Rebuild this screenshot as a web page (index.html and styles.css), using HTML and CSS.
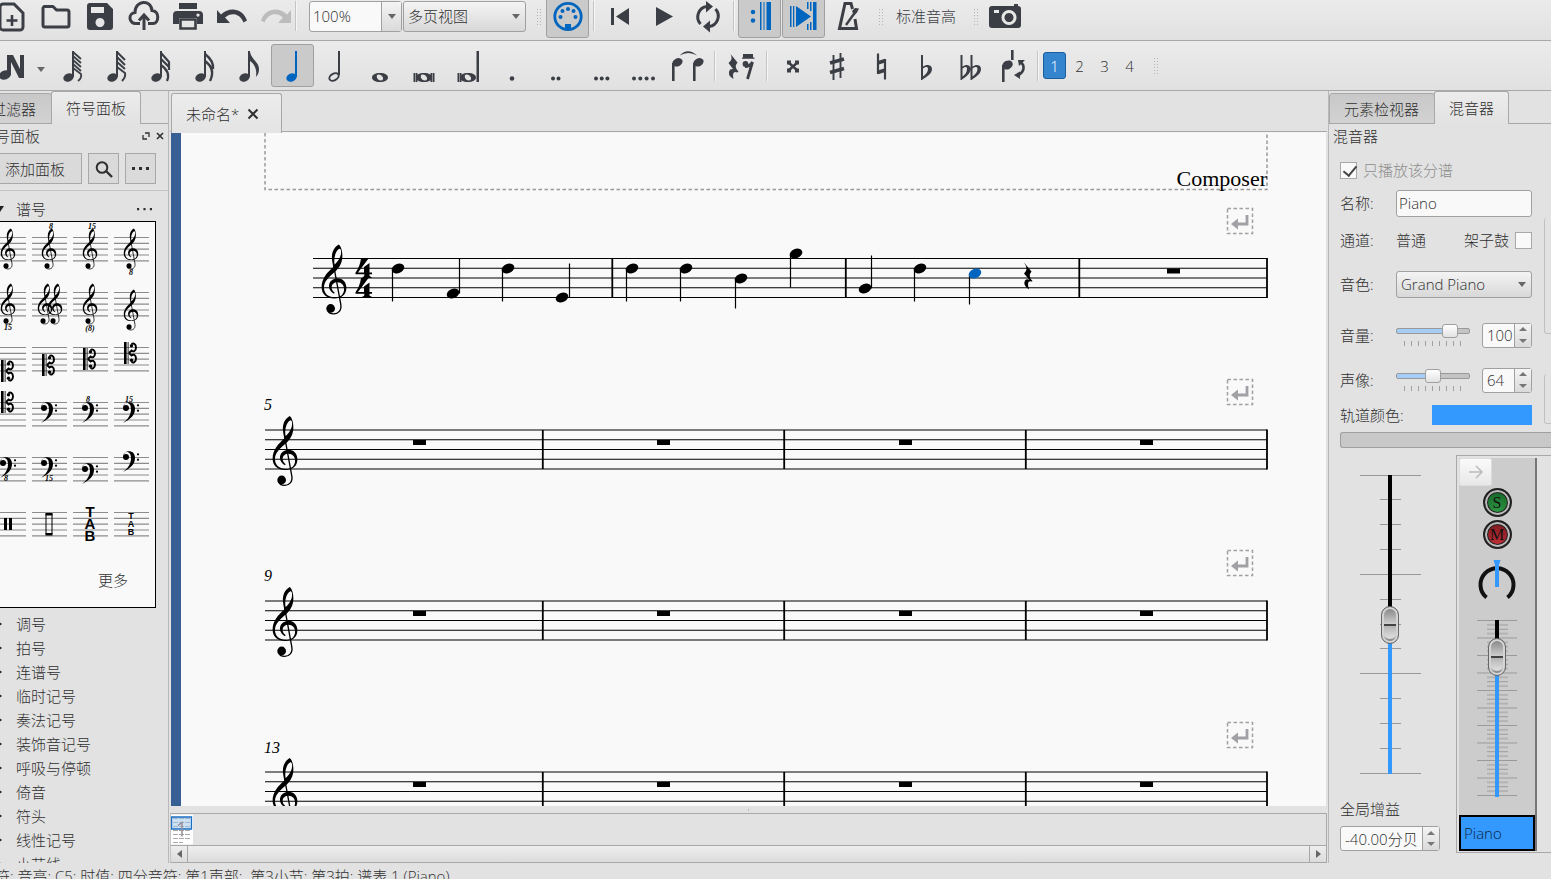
FILE: index.html
```html
<!DOCTYPE html>
<html lang="zh-CN">
<head>
  <meta charset="UTF-8">
  <title>未命名*</title>
  <link rel="stylesheet" href="styles.css">
</head>
<body>

<!-- Shared symbols -->
<svg class="defs" aria-hidden="true">
  <symbol id="treble" viewBox="195 145 82 215">
    <path fill-rule="evenodd" d="M250 148C236 156 228 172 230 192C231 202 233 210 234 215C216 231 199 248 199 275C199 297 214 309 237 309C258 309 273 298 273 277C273 261 262 249 247 249C231 249 221 260 221 273C221 284 228 291 236 295L238 292C232 288 229 283 229 276C229 267 237 261 246 261C259 261 266 270 266 282C266 297 254 306 238 306C219 306 206 295 206 276C206 258 222 244 238 230C252 217 261 203 261 182C261 168 257 152 250 148ZM252 161C256 161 258 166 257 174C256 188 247 199 238 208C234 192 240 166 252 161Z"/>
    <path d="M235 210L256 325C260 345 248 355 235 355C225 355 218 349 216 342" fill="none" stroke="currentColor" stroke-width="4"/>
    <circle cx="226" cy="339" r="13"/>
  </symbol>
  <symbol id="bass" viewBox="0 0 41 24" overflow="visible">
    <path d="M12 5C13-1 24-2 24 7C24 14 18 18 12 21C17 17 20 13 20 7C20 3 18 1 16 1C14 1 13 3 12 5Z"/>
    <circle cx="15" cy="6" r="3"/><circle cx="27" cy="3.3" r="1.1"/><circle cx="27" cy="8.7" r="1.1"/>
  </symbol>
  <symbol id="cclef" viewBox="0 0 41 22" overflow="visible">
    <path d="M13 0h2.6v22H13z"/><path d="M16.4 0h1.6v22h-1.6z" opacity=".5"/>
    <path d="M18 11L20.500 8.500C22 10 25 9.500 25 5.500C25 1.500 22 .8 20.600 2M18 11L20.500 13.500C22 12 25 12.500 25 16.500C25 20.500 22 21.200 20.600 20" fill="none" stroke="currentColor" stroke-width="1.900"/>
    <circle cx="20.500" cy="3.800" r="1.700"/><circle cx="20.500" cy="18.200" r="1.700"/>
  </symbol>
  <symbol id="staff" viewBox="0 0 41 24" overflow="visible">
    <path d="M3 .5h35M3 6.300h35M3 12.200h35M3 18h35M3 23.900h35" stroke="#8c8c8c" stroke-width="1.200"/>
  </symbol>
  <symbol id="head" viewBox="-8 -6 16 12" overflow="visible">
    <ellipse rx="6.500" ry="4.700" transform="rotate(-22)"/>
  </symbol>
  <symbol id="break" viewBox="0 0 26 26" overflow="visible">
    <path d="M.5.5h25v25H.5z" fill="none" stroke="#a0a0a5" stroke-width="1.500" stroke-dasharray="3.500 2.500"/>
    <path d="M20 7v9H8" fill="none" stroke="#a0a0a5" stroke-width="2.800"/><path d="M4 16l7-5.500v11z" fill="#a0a0a5"/>
  </symbol>
  <symbol id="notehead" viewBox="0 0 32 32"><ellipse cx="11.500" cy="27.500" rx="5.300" ry="4" transform="rotate(-22 11.500 27.500)"/><path d="M15 1h2v26h-2z"/></symbol>
  <symbol id="system" viewBox="0 0 1002 40" overflow="visible">
    <path d="M0 0h1002M0 9.750h1002M0 19.500h1002M0 29.250h1002M0 39h1002" stroke="#000" stroke-width="1.200"/>
    <use href="#treble" x="6" y="-15" width="28" height="72"/>
    <path d="M277.800 0v39M519.200 0v39M760.800 0v39M1002-.5v40" stroke="#000" stroke-width="1.800"/>
    <path d="M148 10h13v5h-13zM392 10h13v5h-13zM634 10h13v5h-13zM875 10h13v5h-13z"/>
  </symbol>
</svg>

<!-- Main toolbar -->
<header class="toolbar toolbar-file">
  <button class="tool" aria-label="新建"><svg viewBox="0 0 32 32"><path d="M7 4h11l9 9v14a3 3 0 0 1-3 3H7a3 3 0 0 1-3-3V7a3 3 0 0 1 3-3z" fill="none" stroke="currentColor" stroke-width="3"/><path d="M16 15v11M10.500 20.500h11" stroke="currentColor" stroke-width="2.600"/></svg></button>
  <button class="tool" aria-label="打开"><svg viewBox="0 0 32 32"><path d="M4 6.500h9l3.500 3.500H27a2 2 0 0 1 2 2v13a2 2 0 0 1-2 2H5a2 2 0 0 1-2-2V8z" fill="none" stroke="currentColor" stroke-width="3" stroke-linejoin="round"/></svg></button>
  <button class="tool" aria-label="保存"><svg viewBox="0 0 32 32"><path fill-rule="evenodd" d="M6 3h17l6 6v18a3 3 0 0 1-3 3H6a3 3 0 0 1-3-3V6a3 3 0 0 1 3-3zM7 7v6h13V7zM16 18a4.500 4.500 0 1 0 .01 0z"/></svg></button>
  <button class="tool" aria-label="上传"><svg viewBox="0 0 32 32"><path d="M12 23.500H8a5.500 5.500 0 0 1-1-11C7 0 23-1 24 10.500C32 11 31 23.500 25 23.500H20" fill="none" stroke="currentColor" stroke-width="3"/><path d="M16 30V16M11 20.500l5-5.500 5 5.500" fill="none" stroke="currentColor" stroke-width="3"/></svg></button>
  <button class="tool" aria-label="打印"><svg viewBox="0 0 32 32"><path d="M7 3h18v6H7z"/><path fill-rule="evenodd" d="M5 11h22a4 4 0 0 1 4 4v9h-6v-6H7v6H1v-9a4 4 0 0 1 4-4zM26 13.500a1.600 1.600 0 1 0 .01 0z"/><path d="M8.500 19.500h15v9h-15z" fill="none" stroke="currentColor" stroke-width="2.600"/></svg></button>
  <button class="tool" aria-label="撤销"><svg viewBox="0 0 32 32"><path d="M1 10l4 4.500C14 6 27 9 31 20.500l-3.500 2C24 13 15 12 9 17.500L14 23H1z"/></svg></button>
  <button class="tool" aria-label="重做" disabled><svg viewBox="0 0 32 32"><path d="M31 10l-4 4.500C18 6 5 9 1 20.500l3.500 2C8 13 17 12 23 17.500L18 23h13z"/></svg></button>
  <span class="sep sep-first"></span>
  <div class="combo combo-zoom">
    <input type="text" value="100%" aria-label="缩放">
    <button aria-label="缩放列表"><i class="caret"></i></button>
  </div>
  <div class="select combo-view">
    <select aria-label="视图"><option>多页视图</option></select><i class="caret"></i>
  </div>
  <span class="grip"></span>
  <button class="tool on" aria-label="MIDI输入"><svg viewBox="0 0 32 32"><circle cx="16" cy="16.500" r="13.200" fill="none" stroke="currentColor" stroke-width="2.800"/><path d="M13 24h6v6h-6z"/><circle cx="16" cy="9" r="2"/><circle cx="10.500" cy="11" r="2"/><circle cx="21.500" cy="11" r="2"/><circle cx="8.500" cy="17" r="2"/><circle cx="23.500" cy="17" r="2"/></svg></button>
  <span class="sep"></span>
  <button class="tool" aria-label="回到开头"><svg viewBox="0 0 32 32"><path d="M7 8h3v17H7zM25 8v17L12 16.500z"/></svg></button>
  <button class="tool" aria-label="播放"><svg viewBox="0 0 32 32"><path d="M8 7v19l17-9.500z"/></svg></button>
  <button class="tool" aria-label="循环"><svg viewBox="0 0 32 32"><path d="M8.500 24A10.500 10.500 0 0 1 15 6.500M23.500 9A10.500 10.500 0 0 1 17 26.500" fill="none" stroke="currentColor" stroke-width="3"/><path d="M14 1l7 5.500-7 6zM18 20.500v12l-7-6z"/></svg></button>
  <span class="sep"></span>
  <button class="tool on" aria-label="播放反复"><svg viewBox="0 0 32 32"><path d="M16 2h1.500v28H16zM19.500 2h1v28h-1zM22.500 2H27v28h-4.500z"/><circle cx="9" cy="12" r="2.200"/><circle cx="9" cy="20.500" r="2.200"/></svg></button>
  <button class="tool on" aria-label="跟随播放"><svg viewBox="0 0 32 32"><path d="M2 6h1.500v21H2zM5 6h1.300v21H5zM8 6l15 10.500L8 27zM19 2h1.500v7H19zM22 2h1.500v9H22zM19 24h1.500v6H19zM22 22h1.500v8H22zM25 2h3.500v28H25z"/></svg></button>
  <button class="tool" aria-label="节拍器"><svg viewBox="0 0 32 32"><path d="M20.500 9L19 3.500h-6L7.500 28.500h17L23 19" fill="none" stroke="currentColor" stroke-width="3"/><path d="M14 25L24 11" stroke="currentColor" stroke-width="2.400"/><path d="M20 11l3-3 4 .5-2 4-3 3z"/></svg></button>
  <span class="grip grip-wide"></span>
  <button class="text-tool">标准音高</button>
  <span class="grip grip-last"></span>
  <button class="tool" aria-label="截图"><svg viewBox="0 0 32 32"><path fill-rule="evenodd" d="M3 6h22V4h4v2a3 3 0 0 1 3 3v16a3 3 0 0 1-3 3H3a3 3 0 0 1-3-3V9a3 3 0 0 1 3-3zM20 10a7.500 7.500 0 1 0 .01 0zM20 13a4.500 4.500 0 1 1-.01 0zM5 10v3h5v-3z"/></svg></button>
</header>

<!-- Note input toolbar -->
<div class="toolbar toolbar-notes">
  <button class="tool input-mode" aria-label="音符输入"><svg viewBox="0 0 32 32"><path d="M10 5h6l7 14V5h4v23h-5L14 12v13h-4z"/><ellipse cx="8" cy="25" rx="6" ry="4.500" transform="rotate(-20 8 25)"/></svg></button>
  <button class="drop" aria-label="输入模式"><i class="caret"></i></button>
  <button class="tool" aria-label="128分音符"><svg viewBox="0 0 32 32"><use href="#notehead"/><path d="M16 2l8 7M16 6l8 7M16 10l8 7M16 14l8 7M16 18l8 6q1 4-3 7" fill="none" stroke="currentColor" stroke-width="1.800"/></svg></button>
  <button class="tool" aria-label="64分音符"><svg viewBox="0 0 32 32"><use href="#notehead"/><path d="M16 2l8 8M16 7l8 8M16 12l8 7M16 17l8 6q1 4-3 8" fill="none" stroke="currentColor" stroke-width="2"/></svg></button>
  <button class="tool" aria-label="32分音符"><svg viewBox="0 0 32 32"><use href="#notehead"/><path d="M16 3l8 9v4M16 9l8 8v3M16 15q10 7 6 16" fill="none" stroke="currentColor" stroke-width="2.200"/></svg></button>
  <button class="tool" aria-label="16分音符"><svg viewBox="0 0 32 32"><use href="#notehead"/><path d="M16 4q9 7 8 15M16 11q11 8 5 20" fill="none" stroke="currentColor" stroke-width="2.400"/></svg></button>
  <button class="tool" aria-label="8分音符"><svg viewBox="0 0 32 32"><use href="#notehead"/><path d="M17 2C18 9 26 12 26 19C26 22 25 25 23 27C24 20 22 14 17 11z"/></svg></button>
  <button class="tool on" aria-label="四分音符"><svg viewBox="0 0 32 32"><use href="#notehead" x="3"/></svg></button>
  <button class="tool" aria-label="二分音符"><svg viewBox="0 0 32 32"><ellipse cx="13" cy="27" rx="5" ry="3.300" transform="rotate(-28 13 27)" fill="none" stroke="currentColor" stroke-width="1.900"/><path d="M17 1h2v24h-2z"/></svg></button>
  <button class="tool" aria-label="全音符"><svg viewBox="0 0 32 32"><path fill-rule="evenodd" d="M15 23c5 0 8 2 8 4.500S20 32 15 32s-8-2-8-4.500S10 23 15 23zM13 24.500c-2.500 1-1 6 3 6s2-6.500-3-6z"/></svg></button>
  <button class="tool" aria-label="二全音符"><svg viewBox="0 0 32 32"><path fill-rule="evenodd" d="M15 23c5 0 8 2 8 4.500S20 32 15 32s-8-2-8-4.500S10 23 15 23zM13 24.500c-2.500 1-1 6 3 6s2-6.500-3-6z"/><path d="M4.500 23h2v9h-2zM7 23h1.500v9H7zM21.500 23H23v9h-1.500zM23.500 23h2v9h-2z"/></svg></button>
  <button class="tool" aria-label="长音符"><svg viewBox="0 0 32 32"><path fill-rule="evenodd" d="M15 23c5 0 8 2 8 4.500S20 32 15 32s-8-2-8-4.500S10 23 15 23zM13 24.500c-2.500 1-1 6 3 6s2-6.500-3-6z"/><path d="M4.500 23h2v9h-2zM7 23h1.500v9H7zM23.500 1h2.500v31h-2.500z"/></svg></button>
  <button class="tool" aria-label="附点"><svg viewBox="0 0 32 32"><circle cx="15" cy="28.500" r="2.300"/></svg></button>
  <button class="tool" aria-label="复附点"><svg viewBox="0 0 32 32"><circle cx="12" cy="28.500" r="2"/><circle cx="17.500" cy="28.500" r="2"/></svg></button>
  <button class="tool" aria-label="三附点"><svg viewBox="0 0 32 32"><circle cx="11" cy="28.500" r="2"/><circle cx="16.700" cy="28.500" r="2"/><circle cx="22.400" cy="28.500" r="2"/></svg></button>
  <button class="tool" aria-label="四附点"><svg viewBox="0 0 32 32"><circle cx="5" cy="28.500" r="2"/><circle cx="11.300" cy="28.500" r="2"/><circle cx="17.600" cy="28.500" r="2"/><circle cx="24" cy="28.500" r="2"/></svg></button>
  <button class="tool" aria-label="延音线"><svg viewBox="0 0 32 32"><ellipse cx="4.500" cy="12.300" rx="5.300" ry="4" transform="rotate(-25 4.500 12.300)"/><ellipse cx="25.500" cy="12.300" rx="5.300" ry="4" transform="rotate(-25 25.500 12.300)"/><path d="M-1 13h2.600v18H-1zM20 13h2.600v18H20zM6.500 5.500q8.500-8.500 17.500 0q-8.500-5-17.500 0z"/></svg></button>
  <span class="sep"></span>
  <button class="tool" aria-label="休止符"><svg viewBox="0 0 32 32"><path d="M5.500 4l7 8.500q-4 4.500 1 9l-1 1q-6-2-4 6.500q-7-4-3.500-9.500l3-.5-4.500-6q5-4 2-9zM18 4h10v3.500h1.500v1.300H17V7.500h1z"/><circle cx="20.500" cy="14" r="2.900"/><path d="M20 16.500q5 0 7.500-4.500l-5 17" fill="none" stroke="currentColor" stroke-width="2.800"/></svg></button>
  <span class="sep"></span>
  <button class="tool" aria-label="重升"><svg viewBox="0 0 32 32"><path d="M11 12l10 9M21 12l-10 9" stroke="currentColor" stroke-width="2.400"/><path d="M10 10.500h4v4h-4zM18 10.500h4v4h-4zM10 18.500h4v4h-4zM18 18.500h4v4h-4z"/></svg></button>
  <button class="tool" aria-label="升号"><svg viewBox="0 0 32 32"><path d="M12.500 5v25M19.500 3v25" stroke="currentColor" stroke-width="1.900"/><path d="M9 13l14-4M9 22.500l14-4" stroke="currentColor" stroke-width="3.600"/></svg></button>
  <button class="tool" aria-label="还原"><svg viewBox="0 0 32 32"><path d="M13 3.500V24M20 9v20.500" stroke="currentColor" stroke-width="2.200"/><path d="M12.500 13l8-2.500M12.500 22.500l8-2.500" stroke="currentColor" stroke-width="3.800"/></svg></button>
  <button class="tool" aria-label="降号"><svg viewBox="0 0 32 32"><path fill-rule="evenodd" d="M12 5h2v11.500c4-3 9-1.500 9 2.500c0 5-6 8-10 11h-1zM14 18.500v8c3-2 5-5 5-7.500c0-3-3-2.500-5-.5z"/></svg></button>
  <button class="tool" aria-label="重降"><svg viewBox="0 0 32 32"><path fill-rule="evenodd" d="M7.500 5h2v11.500c4-3 8-1.500 8 2.500c0 5-5 8-9 11h-1zM9.500 18.500v8c3-2 4.500-5 4.500-7.500c0-3-2.500-2.500-4.500-.5zM17.500 5h2v11.500c4-3 8.500-1.500 8.500 2.500c0 5-5.500 8-9.500 11h-1zM19.500 18.500v8c3-2 5-5 5-7.500c0-3-3-2.500-5-.5z"/></svg></button>
  <button class="tool" aria-label="翻转方向"><svg viewBox="0 0 32 32"><ellipse cx="10.500" cy="15" rx="5.500" ry="4.300" transform="rotate(-25 10.500 15)"/><path d="M5 15h2.600v17H5zM14 0h2.600v10H14z"/><path d="M23 12q4 2 3.500 6.500T20 26" fill="none" stroke="currentColor" stroke-width="2.600"/><path d="M21 10h7l-6 6zM17 25l6-3.500V29z"/></svg></button>
  <span class="sep sep-tight"></span>
  <button class="voice on">1</button>
  <button class="voice">2</button>
  <button class="voice">3</button>
  <button class="voice">4</button>
  <span class="grip"></span>
</div>

<main class="workspace">

  <!-- Palettes -->
  <aside class="dock palettes">
    <div class="tabs">
      <button class="tab">选择过滤器</button>
      <button class="tab active">符号面板</button>
    </div>
    <div class="dock-title">
      <h2>符号面板</h2>
      <button class="mini" aria-label="浮动"><svg viewBox="0 0 8 8"><path d="M3 1h4v4M5 7H1V3" fill="none" stroke="currentColor" stroke-width="1.300"/></svg></button>
      <button class="mini" aria-label="关闭"><svg viewBox="0 0 8 8"><path d="M1 1l6 6M7 1l-6 6" stroke="currentColor" stroke-width="1.600"/></svg></button>
    </div>
    <div class="palette-actions">
      <button class="flat add">添加面板</button>
      <button class="flat" aria-label="搜索"><svg viewBox="0 0 18 18"><circle cx="7" cy="7.500" r="5.300" fill="none" stroke="currentColor" stroke-width="2"/><path d="M11 11l6 6" stroke="currentColor" stroke-width="2.400"/></svg></button>
      <button class="flat" aria-label="更多"><svg viewBox="0 0 18 18"><path d="M0 7h3v3H0zM7 7h3v3H7zM14 7h3v3h-3z"/></svg></button>
    </div>
    <div class="palette-head"><i class="open"></i><span>谱号</span><button aria-label="谱号选项"><svg viewBox="0 0 14 4"><path d="M0 1h2v2H0zM6 1h2v2H6zM12 1h2v2h-2z"/></svg></button></div>
    <div class="palette">
      <div class="cells">
        <button class="cell" aria-label="高音谱号"><svg viewBox="0 -15 41 55"><use href="#staff" width="41" height="24"/><use href="#treble" x="12" y="-9" width="16" height="42"/></svg></button>
        <button class="cell" aria-label="高八度高音谱号"><svg viewBox="0 -15 41 55"><use href="#staff" width="41" height="24"/><use href="#treble" x="12" y="-9" width="16" height="42"/><text x="22" y="-8">8</text></svg></button>
        <button class="cell" aria-label="高十五度高音谱号"><svg viewBox="0 -15 41 55"><use href="#staff" width="41" height="24"/><use href="#treble" x="12" y="-9" width="16" height="42"/><text x="22" y="-8">15</text></svg></button>
        <button class="cell" aria-label="低八度高音谱号"><svg viewBox="0 -15 41 55"><use href="#staff" width="41" height="24"/><use href="#treble" x="12" y="-9" width="16" height="42"/><text x="20" y="38">8</text></svg></button>
        <button class="cell" aria-label="低十五度高音谱号"><svg viewBox="0 -15 41 55"><use href="#staff" width="41" height="24"/><use href="#treble" x="12" y="-9" width="16" height="42"/><text x="20" y="38">15</text></svg></button>
        <button class="cell" aria-label="双高音谱号"><svg viewBox="0 -15 41 55"><use href="#staff" width="41" height="24"/><use href="#treble" x="8" y="-9" width="16" height="42"/><use href="#treble" x="18" y="-9" width="16" height="42"/></svg></button>
        <button class="cell" aria-label="可选低八度高音谱号"><svg viewBox="0 -15 41 55"><use href="#staff" width="41" height="24"/><use href="#treble" x="12" y="-9" width="16" height="42"/><text x="20" y="39">(8)</text></svg></button>
        <button class="cell" aria-label="法国小提琴谱号"><svg viewBox="0 -15 41 55"><use href="#staff" width="41" height="24"/><use href="#treble" x="12" y="-3" width="16" height="42"/></svg></button>
        <button class="cell" aria-label="女高音谱号"><svg viewBox="0 -15 41 55"><use href="#staff" width="41" height="24"/><use href="#cclef" y="13" width="41" height="22"/></svg></button>
        <button class="cell" aria-label="次女高音谱号"><svg viewBox="0 -15 41 55"><use href="#staff" width="41" height="24"/><use href="#cclef" y="7" width="41" height="22"/></svg></button>
        <button class="cell" aria-label="中音谱号"><svg viewBox="0 -15 41 55"><use href="#staff" width="41" height="24"/><use href="#cclef" y="1" width="41" height="22"/></svg></button>
        <button class="cell" aria-label="次中音谱号"><svg viewBox="0 -15 41 55"><use href="#staff" width="41" height="24"/><use href="#cclef" y="-5" width="41" height="22"/></svg></button>
        <button class="cell" aria-label="上低音谱号"><svg viewBox="0 -15 41 55"><use href="#staff" width="41" height="24"/><use href="#cclef" y="-11" width="41" height="22"/></svg></button>
        <button class="cell" aria-label="低音谱号"><svg viewBox="0 -15 41 55"><use href="#staff" width="41" height="24"/><use href="#bass" width="41" height="24"/></svg></button>
        <button class="cell" aria-label="高八度低音谱号"><svg viewBox="0 -15 41 55"><use href="#staff" width="41" height="24"/><use href="#bass" width="41" height="24"/><text x="18" y="0">8</text></svg></button>
        <button class="cell" aria-label="高十五度低音谱号"><svg viewBox="0 -15 41 55"><use href="#staff" width="41" height="24"/><use href="#bass" width="41" height="24"/><text x="18" y="0">15</text></svg></button>
        <button class="cell" aria-label="低八度低音谱号"><svg viewBox="0 -15 41 55"><use href="#staff" width="41" height="24"/><use href="#bass" width="41" height="24"/><text x="18" y="24">8</text></svg></button>
        <button class="cell" aria-label="低十五度低音谱号"><svg viewBox="0 -15 41 55"><use href="#staff" width="41" height="24"/><use href="#bass" width="41" height="24"/><text x="20" y="24">15</text></svg></button>
        <button class="cell" aria-label="第三线低音谱号"><svg viewBox="0 -15 41 55"><use href="#staff" width="41" height="24"/><use href="#bass" y="6" width="41" height="24"/></svg></button>
        <button class="cell" aria-label="倍低音谱号"><svg viewBox="0 -15 41 55"><use href="#staff" width="41" height="24"/><use href="#bass" y="-6" width="41" height="24"/></svg></button>
        <button class="cell" aria-label="打击乐谱号"><svg viewBox="0 -15 41 55"><use href="#staff" width="41" height="24"/><path d="M16 6h3v12h-3zM21 6h3v12h-3z"/></svg></button>
        <button class="cell" aria-label="打击乐谱号二"><svg viewBox="0 -15 41 55"><use href="#staff" width="41" height="24"/><path d="M17 2h6v20h-6z" fill="none" stroke="#000"/><path d="M16.500 1h7v2.500h-7zM16.500 21h7v2.500h-7z"/></svg></button>
        <button class="cell" aria-label="六线谱谱号"><svg viewBox="0 -15 41 55"><use href="#staff" width="41" height="24"/><g class="tab-clef"><text x="20" y="5">T</text><text x="20" y="17">A</text><text x="20" y="29">B</text></g></svg></button>
        <button class="cell" aria-label="四线谱谱号"><svg viewBox="0 -15 41 55"><use href="#staff" width="41" height="24"/><g class="tab-clef small"><text x="20" y="7">T</text><text x="20" y="15">A</text><text x="20" y="23">B</text></g></svg></button>
      </div>
      <button class="more">更多</button>
    </div>
    <ul class="palette-list">
      <li>调号</li>
      <li>拍号</li>
      <li>连谱号</li>
      <li>临时记号</li>
      <li>奏法记号</li>
      <li>装饰音记号</li>
      <li>呼吸与停顿</li>
      <li>倚音</li>
      <li>符头</li>
      <li>线性记号</li>
      <li>小节线</li>
    </ul>
  </aside>

  <!-- Score -->
  <section class="center">
    <div class="doc-tabs">
      <div class="doc-tab">未命名* <button aria-label="关闭"><svg viewBox="0 0 12 12"><path d="M1.500 1.500l9 9M10.500 1.500l-9 9" stroke="currentColor" stroke-width="2"/></svg></button></div>
    </div>
    <div class="score">
      <svg class="page" aria-label="乐谱">
        <path d="M84 0v56.500h1002V0" fill="none" stroke="#9a9a9a" stroke-width="1.500" stroke-dasharray="3.500 2.500"/>
        <text class="composer" x="1086" y="53">Composer</text>
        <use href="#break" x="1046" y="75" width="26" height="26"/>
        <use href="#break" x="1046" y="246" width="26" height="26"/>
        <use href="#break" x="1046" y="417" width="26" height="26"/>
        <use href="#break" x="1046" y="589" width="26" height="26"/>

        <g transform="translate(132 125.500)">
          <path d="M0 0h954M0 9.750h954M0 19.500h954M0 29.250h954M0 39h954" stroke="#000" stroke-width="1.200"/>
          <use href="#treble" x="7" y="-15" width="28" height="72"/>
          <path id="four" d="M48 0h7.500L45 14h6V8.500l5.500-4V14H59v1.800h-2.500v1.500q0 1 2 1.200v1H49.500v-1q1.800-.2 1.800-1.200v-1.500H42.500V14.200Q47 8 48 0z"/><use href="#four" y="19.500"/>
          <path d="M299.300 0v39M532.800 0v39M766.300 0v39M954-.5v40" stroke="#000" stroke-width="1.800"/>
          <path d="M854 10h13v5h-13z"/>
          <path d="M79.500 10v33M146.500 35V0M189.500 10v33M256.500 39V5M313.500 10v33M367.500 10v33M422.500 20v30M477.500-4v33M558.500 30V-3M601.500 10v33M656.500 15v31" stroke="#000" stroke-width="1.200"/>
          <use href="#head" x="77" y="4" width="16" height="12"/>
          <use href="#head" x="132" y="29" width="16" height="12"/>
          <use href="#head" x="187" y="4" width="16" height="12"/>
          <use href="#head" x="241" y="33" width="16" height="12"/>
          <use href="#head" x="311" y="4" width="16" height="12"/>
          <use href="#head" x="365" y="4" width="16" height="12"/>
          <use href="#head" x="420" y="14" width="16" height="12"/>
          <use href="#head" x="475" y="-11" width="16" height="12"/>
          <use href="#head" x="544" y="24" width="16" height="12"/>
          <use href="#head" x="599" y="4" width="16" height="12"/>
          <use href="#head" class="picked" x="654" y="9" width="16" height="12"/>
          <path d="M711 4l7.500 9q-4 4.500 1 9.500l-.5.500q-6-2-3 8q-6.500-4-4-9q2-2 4.500-.5l-5.500-6.500q5-4 0-11z"/>
        </g>

        <text class="measure" x="83" y="277">5</text>
        <use href="#system" x="84" y="297" width="1002" height="40"/>
        <text class="measure" x="83" y="448">9</text>
        <use href="#system" x="84" y="468" width="1002" height="40"/>
        <text class="measure" x="83" y="620">13</text>
        <use href="#system" x="84" y="639" width="1002" height="40"/>
      </svg>
    </div>
    <div class="splitter"></div>
    <div class="navigator">
      <div class="nav-body">
        <svg class="nav-page" viewBox="0 0 22 30"><path d="M0 0h22v30H0z" fill="#fff"/><path d="M2 4h18M2 8h18M2 12h18M2 16h18M2 20h18M2 24h18M2 28h10" stroke="#aaa" stroke-dasharray="5 1"/><path d="M.5 2.500h20v12H.5z" fill="#9cc4ec" fill-opacity=".5" stroke="#1a6fc4" stroke-width="1.300"/><path d="M7 11l4-3v14" fill="none" stroke="#978d96" stroke-width="1.500"/></svg>
      </div>
      <div class="nav-scroll">
        <button aria-label="向左"><i class="arrow-left"></i></button>
        <span></span>
        <button aria-label="向右"><i class="arrow-right"></i></button>
      </div>
    </div>
  </section>

  <!-- Mixer -->
  <aside class="dock mixer">
    <div class="tabs">
      <button class="tab">元素检视器</button>
      <button class="tab active">混音器</button>
    </div>
    <div class="dock-title"><h2>混音器</h2></div>
    <div class="mixer-top">
      <form class="channel">
        <label class="only-part"><input type="checkbox" checked disabled>只播放该分谱</label>
        <label for="name">名称:</label>
        <input class="field" type="text" id="name" value="Piano">
        <span>通道:</span>
        <div class="line"><span>普通</span><label class="drum">架子鼓<input type="checkbox"></label></div>
        <label for="patch">音色:</label>
        <div class="select"><select id="patch"><option>Grand Piano</option></select><i class="caret"></i></div>
        <label for="volume">音量:</label>
        <div class="line">
          <div class="slide"><input type="range" class="range-volume" id="volume" value="80"><i class="ticks"></i></div>
          <div class="spin"><input type="text" value="100" aria-label="音量值"><span><button type="button" aria-label="加"></button><button type="button" aria-label="减"></button></span></div>
        </div>
        <label for="pan">声像:</label>
        <div class="line">
          <div class="slide"><input type="range" class="range-pan" id="pan" value="50"><i class="ticks"></i></div>
          <div class="spin"><input type="text" value="64" aria-label="声像值"><span><button type="button" aria-label="加"></button><button type="button" aria-label="减"></button></span></div>
        </div>
        <span class="color-label">轨道颜色:</span>
        <button type="button" class="swatch" aria-label="轨道颜色"></button>
      </form>
      <div class="next-groups"><div class="group-a"></div><div class="group-b"></div></div>
    </div>
    <div class="hscroll"></div>
    <div class="mixer-bottom">
      <div class="master">
        <div class="fader fader-master">
          <svg viewBox="0 0 61 299"><path d="M0 .5h61M20 24.500h21M20 49.500h21M20 74.500h21M0 99.500h61M20 124.500h21M20 149.500h21M20 173.500h21M0 198.500h61M20 223.500h21M20 248.500h21M20 273.500h21M0 298.500h61" stroke="#999"/></svg>
          <input type="range" id="gain" value="50">
        </div>
        <label for="gain">全局增益</label>
        <div class="spin spin-gain"><input type="text" value="-40.00分贝" aria-label="增益值"><span><button type="button" aria-label="加"></button><button type="button" aria-label="减"></button></span></div>
      </div>
      <div class="tracks">
        <div class="strip">
          <button class="expand" aria-label="展开"><svg viewBox="0 0 16 16"><path d="M1 8h13M8 2l6 6-6 6" fill="none" stroke="currentColor" stroke-width="1.500"/></svg></button>
          <button class="round solo">S</button>
          <button class="round mute">M</button>
          <svg class="knob" viewBox="0 0 38 40"><path d="M8.500 37.500A16.500 16.500 0 1 1 29.500 37.500" fill="none" stroke="#111" stroke-width="4"/><path d="M15.500 0h7l-1.500 5v22h-4V5z" fill="#39f"/></svg>
          <div class="fader fader-track">
            <svg viewBox="0 0 40 177">
              <defs><pattern id="scale" width="40" height="17.500" patternUnits="userSpaceOnUse"><path d="M0 .5h40M10 4.900h21M10 9.300h21M10 13.700h21" stroke="#999"/></pattern></defs>
              <path d="M0 0h40v177H0z" fill="url(#scale)"/>
            </svg>
            <input type="range" aria-label="Piano 音量" value="87">
          </div>
          <div class="track-name">Piano</div>
        </div>
      </div>
    </div>
  </aside>
</main>

<footer class="status">音符; 音高: C5; 时值: 四分音符; 第1声部;&nbsp; 第3小节; 第3拍; 谱表 1 (Piano)</footer>

</body>
</html>
```
FILE: styles.css
```css
* {
  box-sizing: border-box;
}

body {
  margin: 0;
  height: 100vh;
  display: flex;
  flex-direction: column;
  overflow: hidden;
  background: #e2e2e2;
  color: #303030;
  font: 300 15px/24px "Open Sans", "Noto Sans CJK SC", sans-serif;
}

button, input, select {
  font: inherit;
  color: inherit;
  margin: 0;
}

button {
  padding: 0;
  border: 0;
  background: none;
}

svg {
  display: block;
  fill: currentColor;
}

.defs {
  position: absolute;
  width: 0;
  height: 0;
}

/* toolbars */
.toolbar {
  display: flex;
  align-items: center;
  flex: none;
  border-bottom: 1px solid #a8a8a8;
  background: linear-gradient(#ebebeb, #e1e1e1);
  color: #3b3e45;
}

.toolbar-file {
  height: 41px;
  padding-bottom: 8px;
}

.toolbar-notes {
  height: 50px;
}

.tool {
  flex: none;
  width: 43px;
  height: 43px;
  margin-right: 1px;
  border: 1px solid transparent;
  border-radius: 3px;
}

.tool svg {
  width: 32px;
  height: 32px;
  margin: auto;
  overflow: visible;
}

.toolbar-file .tool:first-child {
  margin-left: -10px;
}

.tool.on {
  border-color: #a0a0a0;
  background: #cacaca;
  color: #0065bf;
}

.tool:disabled {
  color: #bcbcbc;
}

.input-mode {
  width: 34px;
  margin-left: -4px;
}

.drop {
  width: 20px;
}

.sep {
  width: 2px;
  height: 30px;
  margin: 0 3px;
  border-left: 1px solid #c4c4c4;
  border-right: 1px solid #f6f6f6;
}

.sep-first {
  margin: 0 5px 0 -3px;
}

.sep-tight {
  margin: 0 4px 0 2px;
}

.grip {
  width: 5px;
  height: 17px;
  margin: 0 5px 0 10px;
  background: radial-gradient(circle, #b4b4b4 1px, transparent 1px) 0 0 / 3px 3px;
}

.grip-wide {
  margin: 0 13px 0 8px;
}

.grip-last {
  margin: 0 5px 0 17px;
}

.caret {
  border: 4px solid transparent;
  border-top: 5px solid #666;
  border-bottom: 0;
  display: inline-block;
}

.combo {
  display: flex;
  height: 31px;
  border: 1px solid #a0a0a0;
  border-radius: 3px;
  background: #f9f9f9;
}

.combo input {
  flex: 1;
  min-width: 0;
  padding: 0 3px;
  border: 0;
  background: none;
}

.combo button {
  display: flex;
  align-items: center;
  justify-content: center;
  width: 20px;
  border-left: 1px solid #a0a0a0;
  background: linear-gradient(#f4f4f4, #dadada);
}

.combo-zoom {
  width: 93px;
  margin-left: 7px;
}

.select {
  display: flex;
  align-items: center;
  position: relative;
}

.select select {
  appearance: none;
  width: 100%;
  height: 27px;
  padding: 0 4px;
  border: 1px solid #a0a0a0;
  border-radius: 3px;
  background: linear-gradient(#f4f4f4, #d8d8d8);
}

.select .caret {
  position: absolute;
  right: 6px;
  pointer-events: none;
}

.combo-view {
  width: 123px;
  margin-left: 1px;
}

.combo-view select {
  height: 31px;
}

.toolbar-file .combo,
.toolbar-file .select,
.voice {
  color: #303030;
}

.voice {
  width: 23px;
  height: 27px;
  margin-right: 2px;
}

.voice.on {
  border: 1px solid #1b5c9e;
  border-radius: 3px;
  background: #3484ce;
  color: #fff;
}

/* docks */
.workspace {
  flex: 1;
  min-height: 0;
  display: flex;
}

.dock {
  flex: none;
  overflow: hidden;
}

.palettes {
  width: 169px;
  border-right: 1px solid #b8b8b8;
}

.mixer {
  width: 223px;
  border-left: 1px solid #b8b8b8;
}

.tabs {
  display: flex;
  align-items: flex-end;
  height: 33px;
  box-shadow: inset 0 -1px #a8a8a8;
}

.palettes .tabs {
  justify-content: flex-end;
  padding-right: 27px;
}

.tab {
  flex: none;
  height: 31px;
  padding: 0 15px 0 14px;
  border: 1px solid #a8a8a8;
  border-radius: 3px 3px 0 0;
  background: linear-gradient(#c8c8c8, #d2d2d2);
  line-height: 30px;
}

.tab.active {
  height: 33px;
  padding: 0 14px;
  border-bottom: 0;
  margin-left: -1px;
  background: linear-gradient(#ececec, #e2e2e2);
  line-height: 32px;
}

.dock-title {
  display: flex;
  align-items: center;
  height: 24px;
}

.dock-title h2 {
  flex: 1;
  margin: 0 0 0 4px;
  font-size: 15px;
  font-weight: 300;
}

.palettes h2 {
  margin-left: -20px;
}

.mini {
  width: 8px;
  margin-right: 6px;
}

.mini svg {
  width: 8px;
}

.mini:last-child {
  margin-right: 4px;
}

.palette-actions {
  display: flex;
  justify-content: flex-end;
  gap: 6px;
  padding: 5px 12px 6px 0;
  border-bottom: 1px solid #c6c6c6;
}

.flat {
  flex: none;
  width: 31px;
  height: 31px;
  border: 1px solid #a8a8a8;
  background: #dadada;
}

.flat svg {
  width: 18px;
  margin: auto;
}

.flat.add {
  width: 94px;
}

.palette-head {
  display: flex;
  align-items: center;
  height: 30px;
  padding: 6px 16px 0 0;
}

.palette-head span {
  flex: 1;
  margin-left: 12px;
}

.palette-head svg {
  width: 15px;
}

.open {
  border: 4px solid transparent;
  border-top: 6px solid #222;
  border-bottom: 0;
  margin-left: -4px;
}

.palette {
  display: flex;
  flex-direction: column;
  align-items: flex-end;
  width: 156px;
  height: 387px;
  padding-right: 3px;
  border: 1px solid #000;
  border-left: 0;
  background: #f9f9f9;
}

.cells {
  display: grid;
  grid-template-columns: repeat(4, 41px);
  color: #000;
}

.cell {
  height: 55px;
}

.cell svg {
  width: 41px;
  height: 55px;
  overflow: visible;
}

.cell text {
  font: italic bold 8px "Liberation Serif", serif;
  text-anchor: middle;
}

.cell .tab-clef text {
  font: bold 15px "Liberation Sans", sans-serif;
}

.cell .tab-clef.small text {
  font-size: 9px;
}

.more {
  margin: 16px 24px 0 0;
}

.palette-list {
  margin: 4px 0 0;
  padding: 0;
  list-style: none;
}

.palette-list li::before {
  content: "";
  display: inline-block;
  border: 3px solid transparent;
  border-left: 4px solid #222;
  border-right: 0;
  margin: 0 14px 3px -2px;
}

/* score area */
.center {
  flex: 1;
  min-width: 0;
  display: flex;
  flex-direction: column;
  padding: 0 1px 0 1px;
}

.doc-tabs {
  height: 42px;
  padding: 2px 0 0 1px;
  box-shadow: inset 0 -1px #f4f4f4, inset 0 -2px #a8a8a8;
}

.doc-tab {
  display: inline-flex;
  align-items: center;
  gap: 8px;
  height: 40px;
  padding: 0 22px 0 14px;
  border: 1px solid #a8a8a8;
  border-bottom: 0;
  border-radius: 3px 3px 0 0;
  background: linear-gradient(#ececec, #e4e4e4);
}

.doc-tab svg {
  width: 12px;
}

.score {
  flex: 1;
  min-height: 0;
  margin: 0 1px;
  border-left: 10px solid #385f94;
  background: #f9f9f9;
  overflow: hidden;
}

.page {
  width: 100%;
  height: 100%;
  color: #000;
}

.composer {
  font: 22px "Liberation Serif", serif;
  text-anchor: end;
}

.measure {
  font: italic 16px "Liberation Serif", serif;
}

.picked {
  color: #0065bf;
  fill: #0065bf;
}

.splitter {
  height: 7px;
  background: radial-gradient(circle, #bbb 1px, transparent 1px) center / 3px 4px no-repeat;
}

.navigator {
  border: 1px solid #a8a8a8;
  border-left-color: #c4c4c4;
}

.nav-body {
  height: 31px;
}

.nav-page {
  width: 22px;
  height: 31px;
}

.nav-scroll {
  display: flex;
  height: 17px;
  border-top: 1px solid #a8a8a8;
  background: linear-gradient(#eee, #dcdcdc);
}

.nav-scroll span {
  flex: 1;
  border: 1px solid #a8a8a8;
  border-width: 0 1px;
}

.nav-scroll button {
  width: 16px;
  display: flex;
  align-items: center;
  justify-content: center;
}

.arrow-left, .arrow-right {
  border: 4px solid transparent;
}

.arrow-left {
  border-right: 5px solid #666;
  border-left: 0;
}

.arrow-right {
  border-left: 5px solid #666;
  border-right: 0;
}

/* mixer */
.mixer-top {
  display: flex;
  gap: 12px;
  height: 284px;
  padding: 9px 0 0 11px;
}

.channel {
  flex: none;
  width: 192px;
  display: grid;
  grid-template-columns: 56px 136px;
  grid-template-rows: 26px 40px 34px 54px 48px 42px 28px;
  align-items: center;
}

.only-part {
  grid-column: 1 / 3;
  display: flex;
  align-items: center;
  gap: 6px;
  color: #8c8c8c;
}

.channel input[type="checkbox"] {
  appearance: none;
  width: 17px;
  height: 17px;
  border: 1px solid #a8a8a8;
  background: #f9f9f9;
}

.channel input[type="checkbox"]:checked::before {
  content: "";
  display: block;
  width: 6px;
  height: 11px;
  margin: 0 0 0 5px;
  border: solid #444;
  border-width: 0 2px 2px 0;
  transform: rotate(40deg);
}

.field {
  width: 100%;
  height: 27px;
  padding: 0 2px;
  border: 1px solid #a0a0a0;
  border-radius: 3px;
  background: #f9f9f9;
}

.line {
  display: flex;
  align-items: center;
  justify-content: space-between;
}

.drum {
  display: flex;
  align-items: center;
  gap: 6px;
}

.slide {
  width: 74px;
  padding-top: 4px;
}

.slide input {
  appearance: none;
  display: block;
  width: 100%;
  height: 6px;
  border: 1px solid #999;
  border-radius: 2px;
}

.range-volume {
  background: linear-gradient(to right, #a6cdf6 70%, #c4c4c4 70%);
}

.range-pan {
  background: linear-gradient(to right, #a6cdf6 50%, #c4c4c4 50%);
}

.slide input::-webkit-slider-thumb {
  appearance: none;
  width: 16px;
  height: 14px;
  border: 1px solid #a0a0a0;
  border-radius: 3px;
  background: linear-gradient(#fff, #e2e2e2);
}

.ticks {
  display: block;
  height: 5px;
  margin: 7px 8px 0;
  background: repeating-linear-gradient(to right, #a0a0a0 0 1px, transparent 1px 7px);
}

.spin {
  display: flex;
  width: 50px;
  height: 25px;
  border: 1px solid #a0a0a0;
  border-radius: 3px;
  background: #f9f9f9;
}

.spin input {
  flex: 1;
  min-width: 0;
  padding: 0 0 0 4px;
  border: 0;
  background: none;
}

.spin > span {
  display: flex;
  flex-direction: column;
  align-items: center;
  justify-content: space-around;
  width: 17px;
  border-left: 1px solid #a0a0a0;
  background: linear-gradient(#f4f4f4, #dadada);
}

.spin button {
  border: 4px solid transparent;
  border-bottom: 4px solid #777;
  border-top: 0;
}

.spin button + button {
  border-top: 4px solid #777;
  border-bottom: 0;
}

.color-label {
  white-space: nowrap;
}

.swatch {
  justify-self: end;
  width: 100px;
  height: 20px;
  background: #39f;
}

.next-groups {
  flex: none;
  width: 40px;
  padding-top: 61px;
}

.group-a, .group-b {
  height: 116px;
  border: 1px solid #c0c0c0;
  border-top: 0;
  border-radius: 3px;
}

.group-b {
  height: 50px;
  margin-top: 40px;
}

.hscroll {
  height: 16px;
  margin-left: 11px;
  border: 1px solid #a0a0a0;
  border-right: 0;
  border-radius: 3px 0 0 3px;
  background: #c8c8c8;
}

.mixer-bottom {
  display: flex;
  align-items: flex-start;
  gap: 16px;
  padding: 7px 0 0 11px;
}

.master {
  flex: none;
  width: 100px;
  padding-top: 20px;
}

.master label {
  display: block;
  margin: 23px 0 5px;
}

.spin-gain {
  width: 100px;
}

.fader {
  position: relative;
  width: 61px;
  height: 299px;
  margin: 0 auto;
}

.fader-track {
  width: 40px;
  height: 177px;
}

.fader input {
  appearance: none;
  position: absolute;
  inset: 0;
  width: 26px;
  height: 100%;
  margin: 0 auto;
  writing-mode: vertical-lr;
  direction: rtl;
  background: linear-gradient(#000 50%, #39f 50%) center / 4px 100% no-repeat;
}

.fader-track input {
  background-image: linear-gradient(#000 21%, #39f 21%);
}

.fader input::-webkit-slider-thumb {
  appearance: none;
  width: 18px;
  height: 38px;
  border: 1px solid #666;
  border-radius: 9px;
  background: linear-gradient(#808080, #d0d0d0 48%, #444 48% 52%, #b4b4b4 52%, #eee);
  box-shadow: inset 0 0 0 2px #d4d4d4, inset 0 -4px 1px #888;
}

.tracks {
  flex: 1;
  height: 398px;
  border: 1px solid #a8a8a8;
  border-right: 0;
  padding: 2px 0 0 2px;
}

.strip {
  display: flex;
  flex-direction: column;
  align-items: center;
  width: 78px;
  height: 393px;
  border-right: 2px solid #777;
  background: #ccc;
}

.expand {
  align-self: flex-start;
  width: 33px;
  height: 28px;
  border: 1px solid #ddd;
  border-radius: 2px;
  background: linear-gradient(#fafafa, #e8e8e8);
  color: #bbb;
}

.expand svg {
  width: 16px;
  margin: auto;
}

.round {
  width: 29px;
  height: 29px;
  margin: 2px 0 1px;
  border: 2px solid #222;
  border-radius: 50%;
  box-shadow: inset 0 0 0 2px #bbb, inset 0 0 0 3px #222;
  background: radial-gradient(circle at 50% 90%, #2f9c45, #125a22);
  color: #111;
  font: 16px/24px "Liberation Serif", serif;
}

.mute {
  background: radial-gradient(circle at 50% 90%, #c03038, #701418);
}

.knob {
  width: 38px;
  height: 40px;
  margin: 10px 0 20px;
}

.track-name {
  align-self: stretch;
  height: 36px;
  margin-top: auto;
  padding: 0 3px;
  border: 2px solid #000;
  background: #39f;
  color: #10243c;
  line-height: 32px;
}

.status {
  flex: none;
  height: 16px;
  overflow: hidden;
  text-indent: -20px;
  line-height: 26px;
  white-space: nowrap;
}
```
